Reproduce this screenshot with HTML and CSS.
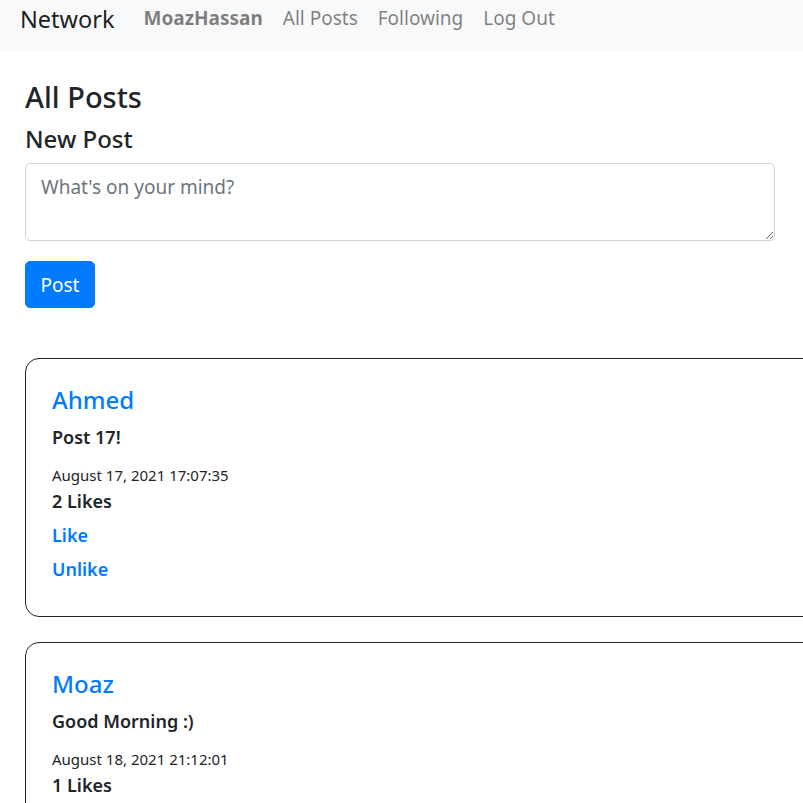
FILE: index.html
```html
<!DOCTYPE html>
<html lang="en">
<head>
<meta charset="utf-8">
<title>Network</title>
<link rel="stylesheet" href="styles.css">
</head>
<body>
<nav class="navbar">
  <a class="brand" href="#">Network</a>
  <ul class="nav">
    <li><a class="nav-link strong" href="#">MoazHassan</a></li>
    <li><a class="nav-link" href="#">All Posts</a></li>
    <li><a class="nav-link" href="#">Following</a></li>
    <li><a class="nav-link" href="#">Log Out</a></li>
  </ul>
</nav>
<main class="body">
  <h3 class="title">All Posts</h3>
  <h5 class="subtitle">New Post</h5>
  <form class="new-post">
    <textarea class="form-control" rows="2" placeholder="What's on your mind?"></textarea>
    <button class="btn" type="button">Post</button>
  </form>
  <div class="posts">
    <div class="post">
      <a class="author" href="#">Ahmed</a>
      <div class="content">Post 17!</div>
      <div class="date">August 17, 2021 17:07:35</div>
      <div class="likes">2 Likes</div>
      <a class="action first" href="#">Like</a>
      <a class="action" href="#">Unlike</a>
    </div>
    <div class="post">
      <a class="author" href="#">Moaz</a>
      <div class="content">Good Morning :)</div>
      <div class="date">August 18, 2021 21:12:01</div>
      <div class="likes">1 Likes</div>
      <a class="action first" href="#">Like</a>
      <a class="action" href="#">Unlike</a>
    </div>
  </div>
</main>
</body>
</html>
```
FILE: styles.css
```css
html { overflow: hidden; }
body {
  margin: 0;
  font-family: "Noto Sans", "Open Sans", sans-serif;
  font-size: 20px;
  color: #212529;
  background: #fff;
}
a { text-decoration: none; }
.navbar {
  display: flex;
  align-items: flex-start;
  height: 51px;
  padding: 0 20px;
  background: #f8f9fa;
  box-sizing: border-box;
}
.brand {
  font-size: 23.5px;
  color: rgba(0,0,0,.9);
  margin-right: 19px;
  line-height: 38px;
}
.nav {
  display: flex;
  list-style: none;
  margin: 0;
  padding: 0;
}
.nav-link {
  display: block;
  padding: 0 10px;
  color: rgba(0,0,0,.5);
  font-size: 19px;
  line-height: 36px;
}
.nav-link.strong { font-weight: 700; }
.body { padding: 0 25px; }
.title {
  margin: 28px 0 0;
  font-size: 29px;
  font-weight: 500;
  line-height: 36px;
}
.subtitle {
  margin: 9px 0 0;
  font-size: 24px;
  font-weight: 500;
  line-height: 30px;
}
.new-post { margin-top: 9px; }
.form-control {
  display: block;
  width: 750px;
  box-sizing: border-box;
  height: 78px;
  padding: 8px 15px;
  font-family: inherit;
  font-size: 19px;
  line-height: 30px;
  color: #495057;
  border: 1px solid #ced4da;
  border-radius: 5px;
  resize: vertical;
}
.form-control::placeholder { color: #6c757d; opacity: 1; }
.btn {
  display: block;
  margin-top: 20px;
  width: 70px;
  height: 47px;
  padding: 0;
  font-family: inherit;
  font-size: 19px;
  color: #fff;
  background: #007bff;
  border: 1px solid #007bff;
  border-radius: 5px;
}
.posts {
  margin-top: 50px;
  display: flex;
  flex-direction: column;
  gap: 25px;
  width: 820px;
}
.post {
  border: 1px solid #212529;
  border-radius: 14px;
  padding: 21px 26px 30px;
  display: flex;
  flex-direction: column;
  align-items: flex-start;
}
.author {
  color: #007bff;
  font-size: 24px;
  line-height: 40px;
  font-weight: 500;
}
.content {
  font-size: 18px;
  font-weight: 600;
  line-height: 34px;
}
.date {
  margin-top: 11px;
  font-size: 15px;
  line-height: 20px;
}
.likes {
  font-size: 18px;
  font-weight: 600;
  line-height: 32px;
}
.action {
  color: #007bff;
  font-size: 18px;
  font-weight: 600;
  line-height: 34px;
}
.action.first { margin-top: 1px; }
```
